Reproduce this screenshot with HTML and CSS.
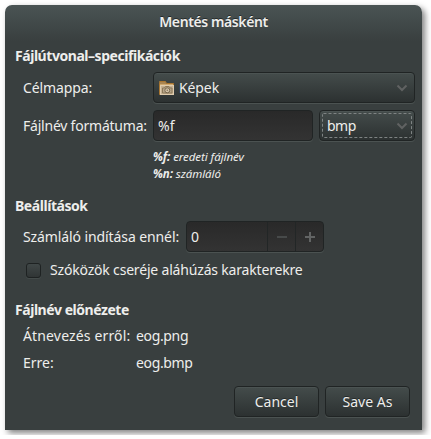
FILE: index.html
```
<!DOCTYPE html>
<html lang="hu">
<head>
<meta charset="utf-8">
<title>Mentés másként</title>
<link rel="stylesheet" href="styles.css">
</head>
<body>
<main class="dialog">
  <header class="titlebar"><span class="t-title">Mentés másként</span></header>

  <h2 class="heading heading-path">Fájlútvonal–specifikációk</h2>
  <div class="row">
    <span class="label t-folder">Célmappa:</span>
    <div class="control combo folder">
      <svg class="folder-icon" width="16" height="16" viewBox="0 0 16 16">
        <path d="M.5 2.500V1.500H6.500L7.500 3.500H14.500V14.500H.5Z" fill="#a98552" stroke="#a97631"/>
        <path d="M1 4.500H14" stroke="#cfa970"/>
        <rect x="1.500" y="5.500" width="13" height="9" fill="#c5b193" stroke="#dfccae"/>
        <path d="M3.500 13V8H5.500L6.500 6.500H10L11 8H13V13Z" fill="#b7a58a" stroke="#8b7859"/>
        <circle cx="8.300" cy="10.300" r="2.500" fill="#d4c4a9" stroke="#75654c"/>
        <circle cx="8.300" cy="10.300" r=".8" fill="#877459"/>
      </svg>
      <span class="t-pictures">Képek</span>
      <svg class="chevron" width="12" height="8" viewBox="0 0 12 8"><path d="M1.500 1.500L6 6L10.500 1.500"/></svg>
    </div>
  </div>
  <div class="row row-format">
    <span class="label t-format">Fájlnév formátuma:</span>
    <div class="control entry"><span>%f</span></div>
    <div class="control combo type">
      <svg class="focus" width="90" height="25"><rect x=".5" y=".5" width="89" height="24" rx="1"/></svg>
      <span class="t-bmp">bmp</span>
      <svg class="chevron" width="12" height="8" viewBox="0 0 12 8"><path d="M1.500 1.500L6 6L10.500 1.500"/></svg>
    </div>
  </div>
  <div class="notes">
    <div><b>%f:</b> eredeti fájlnév</div>
    <div><b>%n:</b> számláló</div>
  </div>

  <h2 class="heading heading-options">Beállítások</h2>
  <div class="row">
    <span class="label counter-label">Számláló indítása ennél:</span>
    <div class="control spinner">
      <span class="value">0</span>
      <span class="step"><svg width="10" height="10"><path d="M0 5H10" stroke="#474a4a" stroke-width="2"/></svg></span>
      <span class="step"><svg width="10" height="10"><path d="M0 5H10M5 0V10" stroke="#626464" stroke-width="2"/></svg></span>
    </div>
  </div>
  <div class="check-row"><span class="checkbox"></span><span class="t-check">Szóközök cseréje aláhúzás karakterekre</span></div>

  <h2 class="heading heading-preview">Fájlnév előnézete</h2>
  <div class="preview"><span class="preview-label t-from">Átnevezés erről:</span><span class="t-file">eog.png</span></div>
  <div class="preview"><span class="preview-label">Erre:</span><span class="t-file">eog.bmp</span></div>

  <footer class="actions">
    <div class="control button">Cancel</div>
    <div class="control button">Save As</div>
  </footer>
</main>
</body>
</html>
```
FILE: styles.css
```
* { box-sizing: border-box; }
body { margin: 0; background: #fff; font: 14px/20px "Noto Sans", sans-serif; color: #eeeeec; }
.dialog {
  width: 417px; height: 425px; margin: 5px;
  display: flex; flex-direction: column;
  border-radius: 7px 7px 0 0;
  background: linear-gradient(#4a5454, #393f3f 36px);
  box-shadow: 3px 3px 6px rgba(0,0,0,.5);
  white-space: nowrap;
}
.titlebar { height: 37px; padding-top: 7px; text-align: center; font-weight: 600; letter-spacing: -.4px; text-shadow: 0 -1px #252a2a; }
.heading { margin: 0; padding-left: 10px; font-size: 14px; line-height: 20px; font-weight: 700; letter-spacing: -.45px; }
.heading-path { margin-top: 4px; margin-bottom: 6px; }
.row { display: flex; align-items: center; height: 31px; padding-left: 18px; }
.row-format { margin-top: 7px; }
.label { width: 130px; flex: none; letter-spacing: -.1px; }
.t-format { letter-spacing: -.22px; }
.control {
  display: flex; align-items: center; height: 31px; flex: none;
  border: 1px solid #202424; border-radius: 4px;
  background: linear-gradient(#444c4b, #2c3131);
  box-shadow: 0 1px #4b5251, inset 0 1px #4b5352;
}
.folder { width: 262px; padding-left: 5px; }
.folder-icon { margin-right: 4px; }
.t-pictures { letter-spacing: -.1px; }
.chevron { margin-left: auto; margin-right: 6px; fill: none; stroke: #606262; stroke-width: 2; }
.entry { width: 160px; padding-left: 4px; margin-right: 6px; background: linear-gradient(#292929, #333); box-shadow: 0 1px #4b5251; }
.type { width: 96px; padding-left: 7px; position: relative; }
.t-bmp { letter-spacing: -.5px; }
.focus { position: absolute; left: 2px; top: 2px; fill: none; stroke: #7e8383; stroke-dasharray: 3 2; }
.notes { padding: 7px 0 0 148px; font-size: 11.500px; line-height: 17px; font-style: italic; letter-spacing: -.07px; }
.heading-options { margin-top: 14px; margin-bottom: 5px; }
.counter-label { width: 163px; }
.spinner { width: 138px; background: linear-gradient(#292929, #333); box-shadow: 0 1px #4b5251; }
.value { flex: 1; padding-left: 4px; }
.step { width: 28px; height: 29px; border-left: 1px solid #222626; display: flex; align-items: center; justify-content: center; }
.check-row { display: flex; align-items: center; height: 20px; margin-top: 8px; padding-left: 21px; }
.checkbox { width: 15px; height: 15px; margin-right: 9px; border: 1px solid #1e2222; border-radius: 3px; background: linear-gradient(#404747, #303535); box-shadow: 0 1px #444b4a; }
.t-check { letter-spacing: -.18px; }
.heading-preview { margin-top: 20px; margin-bottom: 2px; }
.preview { display: flex; height: 27px; line-height: 27px; padding-left: 18px; }
.preview-label { width: 113px; }
.t-from { letter-spacing: .15px; }
.t-file { letter-spacing: -.35px; }
.actions { display: flex; justify-content: flex-end; gap: 6px; margin-top: 10px; padding-right: 12px; }
.button { width: 85px; justify-content: center; text-shadow: 0 -1px #242929; }
```
